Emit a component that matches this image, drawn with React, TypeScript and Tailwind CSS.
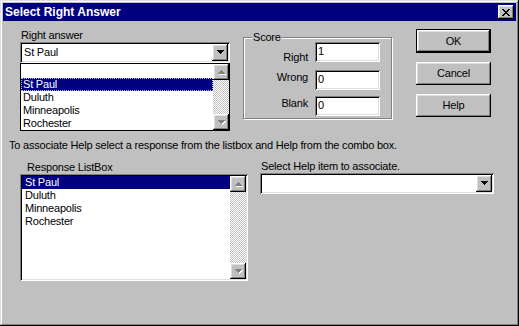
import React from 'react';

const SUNKEN =
  'shadow-[inset_1px_1px_0_#808080,inset_-1px_-1px_0_#fff,inset_2px_2px_0_#000,inset_-2px_-2px_0_#dfdfdf]';
const RAISED =
  'shadow-[inset_-1px_-1px_0_#000,inset_1px_1px_0_#fff,inset_-2px_-2px_0_#808080,inset_2px_2px_0_#dfdfdf]';
const DITHER = 'bg-[repeating-conic-gradient(#c0c0c0_0%_25%,#fff_0%_50%)] bg-[length:2px_2px]';

// little pixel triangle, 7 wide 4 tall
const Tri = ({ dir, color, dx = 0, dy = 0 }: { dir: 'up' | 'down'; color: string; dx?: number; dy?: number }) => {
  const rows = dir === 'down' ? [0, 1, 2, 3] : [3, 2, 1, 0];
  return (
    <>
      {rows.map((r, i) => (
        <rect key={i} x={r + dx} y={i + dy} width={7 - r * 2} height={1} fill={color} />
      ))}
    </>
  );
};

const Arrow = ({ dir, disabled }: { dir: 'up' | 'down'; disabled?: boolean }) => (
  <svg width="8" height="5" shapeRendering="crispEdges">
    {disabled && <Tri dir={dir} color="#fff" dx={1} dy={1} />}
    <Tri dir={dir} color={disabled ? '#808080' : '#000'} />
  </svg>
);

const ArrowButton = ({ dir, disabled, className = '' }: { dir: 'up' | 'down'; disabled?: boolean; className?: string }) => (
  <div className={`flex w-[16px] items-center justify-center bg-[#c0c0c0] pl-[1px] ${RAISED} ${className}`}>
    <Arrow dir={dir} disabled={disabled} />
  </div>
);

const ScrollBar = () => (
  <div className="flex w-[16px] flex-col self-stretch">
    <ArrowButton dir="up" disabled className="h-[16px]" />
    <div className={`flex-1 ${DITHER}`} />
    <ArrowButton dir="down" disabled className="h-[16px]" />
  </div>
);

const Combo = ({ value = '', className = '' }: { value?: string; className?: string }) => (
  <div className={`flex h-[21px] items-center bg-white p-[2px] ${SUNKEN} ${className}`}>
    <span className="flex-1 pl-[2px]">{value}</span>
    <ArrowButton dir="down" className="h-[17px]" />
  </div>
);

const TextBox = ({ value }: { value: string }) => (
  <div className={`h-[20px] w-[65px] bg-white pt-[3px] pl-[3px] ${SUNKEN}`}>{value}</div>
);

const Button = ({ label, isDefault }: { label: string; isDefault?: boolean }) => (
  <div className={isDefault ? 'border border-black' : ''}>
    <div className={`flex items-center justify-center bg-[#c0c0c0] ${isDefault ? 'h-[22px]' : 'h-[23px]'} ${RAISED}`}>
      {label}
    </div>
  </div>
);

const CITIES = ['St Paul', 'Duluth', 'Minneapolis', 'Rochester'];

const CloseGlyph = () => {
  const rows = [
    [0, 1, 6, 7],
    [1, 2, 5, 6],
    [2, 3, 4, 5],
    [3, 4],
    [2, 3, 4, 5],
    [1, 2, 5, 6],
    [0, 1, 6, 7],
  ];
  return (
    <svg width="8" height="7" shapeRendering="crispEdges">
      {rows.map((cols, y) => cols.map((x) => <rect key={`${y}-${x}`} x={x} y={y} width={1} height={1} fill="#000" />))}
    </svg>
  );
};

const App: React.FC = () => {
  return (
    <div
      className="flex h-[326px] w-[519px] flex-col bg-[#c0c0c0] p-[3px] font-['Liberation_Sans',Arial,sans-serif] text-[11px] leading-[13px] tracking-[-0.2px] text-black shadow-[inset_-1px_-1px_0_#000,inset_1px_1px_0_#dfdfdf,inset_-2px_-2px_0_#808080,inset_2px_2px_0_#fff]"
    >
      {/* title bar */}
      <div className="flex h-[18px] items-center justify-between bg-[#000080] pl-[2px] pr-[2px]">
        <span className="text-[12px] font-bold tracking-normal text-white">Select Right Answer</span>
        <div className={`flex h-[14px] w-[16px] items-center justify-center bg-[#c0c0c0] ${RAISED}`}>
          <CloseGlyph />
        </div>
      </div>

      {/* top part */}
      <div className="flex items-start">
        <div className="ml-[17px] w-[210px] pt-[8px]">
          <div className="pl-[1px]">Right answer</div>
          <Combo value="St Paul" />
          <div className="flex h-[68px] border border-black bg-white">
            <div className="flex-1 pt-[1px]">
              <div className="h-[13px]" />
              {CITIES.map((c, i) => (
                <div
                  key={c}
                  className={`h-[13px] pl-[2px] ${i === 0 ? 'bg-[#000080] text-white outline-1 -outline-offset-1 outline-dotted outline-[#c0c0c0]' : ''}`}
                >
                  {c}
                </div>
              ))}
            </div>
            <ScrollBar />
          </div>
        </div>

        <div className="relative ml-[13px] mt-[16px] flex h-[82px] w-[149px] flex-col gap-[6px] border border-[#808080] pt-[4px] shadow-[1px_1px_0_#fff,inset_1px_1px_0_#fff]">
          <span className="absolute -top-[7px] left-[8px] bg-[#c0c0c0] px-[1px]">Score</span>
          <div className="flex items-start">
            <span className="w-[64px] pt-[9px] text-right">Right</span>
            <div className="ml-[7px]">
              <TextBox value="1" />
            </div>
          </div>
          <div className="flex items-start">
            <span className="w-[64px] pt-[1px] text-right">Wrong</span>
            <div className="ml-[7px]">
              <TextBox value="0" />
            </div>
          </div>
          <div className="flex items-start">
            <span className="w-[64px] pt-[1px] text-right">Blank</span>
            <div className="ml-[7px]">
              <TextBox value="0" />
            </div>
          </div>
        </div>

        <div className="ml-[24px] flex w-[75px] flex-col pt-[8px]">
          <Button label="OK" isDefault />
          <div className="mt-[9px]">
            <Button label="Cancel" />
          </div>
          <div className="mt-[9px]">
            <Button label="Help" />
          </div>
        </div>
      </div>

      {/* help association */}
      <div className="ml-[6px] mt-[8px]">
        To associate Help select a response from the listbox and Help from the combo box.
      </div>

      <div className="mt-[9px] flex items-start">
        <div className="ml-[17px] w-[228px]">
          <div className="pl-[7px]">Response ListBox</div>
          <div className={`flex h-[107px] bg-white p-[2px] ${SUNKEN}`}>
            <div className="flex-1">
              {CITIES.map((c, i) => (
                <div key={c} className={`h-[13px] pl-[3px] ${i === 0 ? 'bg-[#000080] text-white' : ''}`}>
                  {c}
                </div>
              ))}
            </div>
            <ScrollBar />
          </div>
        </div>

        <div className="-mt-[1px] ml-[12px] w-[234px]">
          <div className="pl-[1px]">Select Help item to associate.</div>
          <Combo />
        </div>
      </div>
    </div>
  );
};

export default App;
